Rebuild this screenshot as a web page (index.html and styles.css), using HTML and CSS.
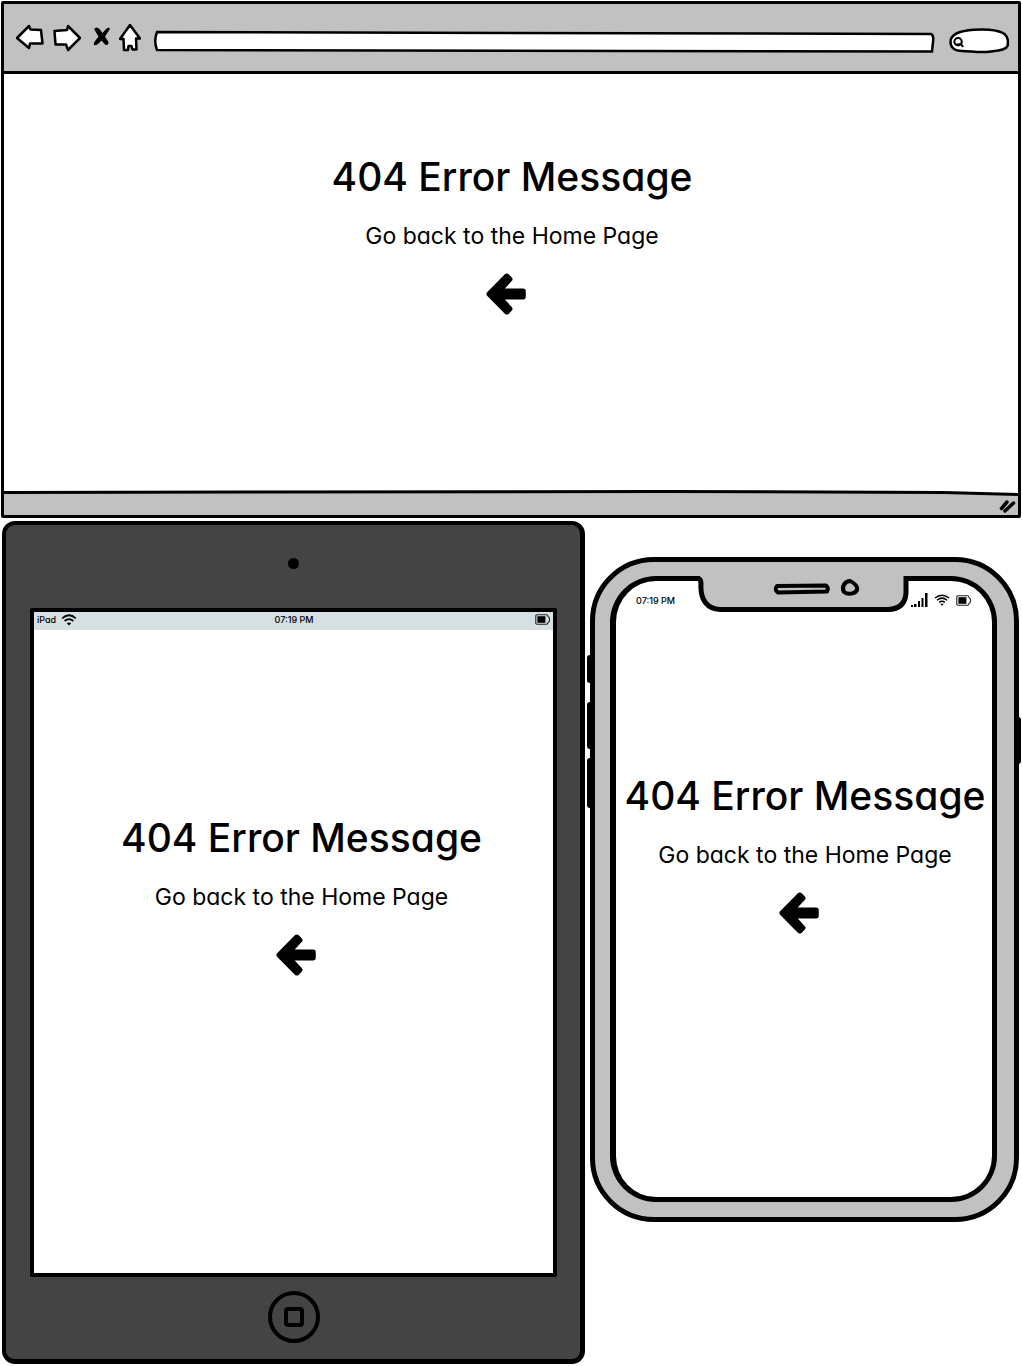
FILE: index.html
```html
<!DOCTYPE html>
<html lang="en">
<head>
<meta charset="utf-8">
<meta name="viewport" content="width=device-width, initial-scale=1">
<title>404 Error Message</title>
<link rel="stylesheet" href="styles.css">
</head>
<body>
<svg class="symbols" aria-hidden="true">
  <symbol id="arrow" viewBox="0 0 52 42">
    <path d="M3.300 21L20.800 3.300L23.700 6.200L12.500 18.200H37V23.800H12.500L23.700 35.800L20.800 38.700Z" stroke="#000" stroke-width="5.500" stroke-linejoin="round"/>
  </symbol>
  <symbol id="wifi" viewBox="0 0 16 12">
    <path d="M1.2 4.4Q8-1.8 14.8 4.4M3.6 7Q8 3.2 12.4 7" fill="none" stroke="#000" stroke-width="1.8"/>
    <path d="M5.8 9.2Q8 7.6 10.2 9.2L8 11.6Z"/>
  </symbol>
  <symbol id="battery" viewBox="0 0 16 11">
    <path d="M2 .8H11.5Q12.8.8 13 2.4Q14.6 3 14.6 5.5T13 8.6Q12.8 10.2 11.5 10.2H2Q.8 10.2.8 9V2Q.8.8 2 .8Z" fill="none" stroke="#222" stroke-width="1.1"/>
    <path d="M2.4 2.2H10.4V8.8H2.4Z"/>
  </symbol>
</svg>

<section class="browser">
  <header class="toolbar">
    <button class="tool" aria-label="Back"><svg width="28" height="28" viewBox="16 23 28 28"><path d="M17 37L29 25L30.5 28.500L41 29L42.5 42.500H30L29 47Z"/></svg></button>
    <button class="tool" aria-label="Forward"><svg width="28" height="28" viewBox="53 23 28 28"><path d="M54.500 30L67 29L68 25L80 37L68 49L66 43.500L55.500 43.500Z"/></svg></button>
    <button class="tool" aria-label="Stop"><svg width="20" height="28" viewBox="90 23 20 28"><path class="cross" d="M94 28Q96.500 25 99.500 28L102.500 32L106 28Q109 25.500 110 28L105 35.500L108.500 41Q108.500 45 105 43.500L101.500 39.500L98 43Q93 46 94 41.500L98.500 35.500Z"/></svg></button>
    <button class="tool" aria-label="Home"><svg width="22" height="28" viewBox="119 23 22 28"><path d="M130 24L140 37.500H136L136.500 48.500H132.500L131.500 45H128.500L128 49H124L123.500 38H120Z"/></svg></button>
    <div class="field address">
      <svg class="field-shape" viewBox="0 0 781 23" preserveAspectRatio="none" aria-hidden="true"><path d="M3 2L777 4Q780 5 779 12L778 21.500L3 20Q-.5 11 3 2Z"/></svg>
      <input class="field-input" type="text" aria-label="Address">
    </div>
    <div class="field search">
      <svg class="field-shape" viewBox="949 28 60 26" aria-hidden="true"><path d="M950.500 42C950.500 33 962 30.500 974 29.800C986 29 998 30.500 1003 33C1008 36 1008.500 41 1007.500 46C1005 51 996 50.500 986 52C976 52.500 970 51 962 51C954 51 950.500 47 950.500 42Z"/><path class="lens" d="M958 38A3.700 3.700 0 1 0 958.100 38ZM957 44.500L961 44L963 47"/></svg>
      <input class="field-input" type="search" aria-label="Search">
    </div>
  </header>
  <main class="page">
    <div class="message">
      <h1 class="title">404 Error Message</h1>
      <p class="hint">Go back to the Home Page</p>
      <a class="back" href="#home" aria-label="Home page"><svg class="arrow"><use href="#arrow"/></svg></a>
    </div>
  </main>
  <footer class="statusline">
    <svg class="edge" viewBox="0 0 1014 6" preserveAspectRatio="none" aria-hidden="true"><path d="M0 3L240 2L660 1.500L940 2.500L1014 5V6H0Z" fill="#c1c1c1"/><path d="M0 2.500L240 2L660 1.500L940 2.500L1014 4.500" fill="none" stroke="#000" stroke-width="3"/></svg>
    <svg class="grip" width="17" height="14" viewBox="0 0 17 14" aria-hidden="true"><path d="M2.500 9.500L8 3M6 12L14.500 4" fill="none" stroke="#000" stroke-width="3.500" stroke-linecap="round"/></svg>
  </footer>
</section>

<div class="devices">
  <section class="tablet">
    <div class="tablet-top"><span class="camera"></span></div>
    <div class="tablet-screen">
      <div class="tablet-status">
        <span class="carrier">iPad <svg width="16" height="12"><use href="#wifi"/></svg></span>
        <time>07:19 PM</time>
        <svg class="charge" width="16" height="11"><use href="#battery"/></svg>
      </div>
      <div class="message">
        <h2 class="title">404 Error Message</h2>
        <p class="hint">Go back to the Home Page</p>
        <a class="back" href="#home" aria-label="Home page"><svg class="arrow"><use href="#arrow"/></svg></a>
      </div>
    </div>
    <div class="tablet-bottom"><button class="home" aria-label="Home button"><span class="home-mark"></span></button></div>
  </section>

  <section class="phone">
    <span class="key key-mute"></span>
    <span class="key key-up"></span>
    <span class="key key-down"></span>
    <span class="key key-power"></span>
    <svg class="notch" width="218" height="52" viewBox="694 562 218 52" aria-hidden="true">
      <path d="M700 574V590Q703 609 720 609H888Q906 609 906 592V574Z" fill="#c1c1c1"/>
      <g fill="none" stroke="#000" stroke-width="5">
        <path d="M694 578.500H698Q701 579 701 584C700 601 708 609 720 609.500H888Q905 609 906 593V578.500H912"/>
        <path d="M777 586L826 585.500Q829 588 827 591.500L778 592.500Q774 590 777 586Z" stroke-width="4" stroke-linejoin="round"/>
        <path d="M850 581C855 583 858 587 857 590C855 594 848 595 844 592C841 587 845 581 850 581Z" stroke-width="4"/>
      </g>
    </svg>
    <div class="phone-screen">
      <div class="phone-status">
        <time>07:19 PM</time>
        <span class="signals">
          <svg width="17" height="14" viewBox="0 0 17 14"><path d="M0 12H2V14H0ZM3 11H5.500V14H3ZM7 8H9V14H7ZM10.500 5H12.500V14H10.500ZM14 0H16.500V14H14Z"/></svg>
          <svg width="16" height="12" viewBox="0 0 16 12"><path d="M1 4Q8-1.500 15 4M3 6.200Q8 2 13 6.200M5.200 8.400Q8 6 10.800 8.400" fill="none" stroke="#000" stroke-width="1.500"/><path d="M6.200 9.800H9.800L8 11.800Z"/></svg>
          <svg width="16" height="11"><use href="#battery"/></svg>
        </span>
      </div>
      <div class="message">
        <h2 class="title">404 Error Message</h2>
        <p class="hint">Go back to the Home Page</p>
        <a class="back" href="#home" aria-label="Home page"><svg class="arrow"><use href="#arrow"/></svg></a>
      </div>
    </div>
  </section>
</div>
</body>
</html>
```
FILE: styles.css
```css
* { box-sizing: border-box; }

body {
  margin: 0;
  padding: 1px 0 2px;
  background: #fff;
  color: #000;
  font-family: Inter, "Noto Sans", sans-serif;
  /* single-storey "a" */
  font-feature-settings: "cv11";
}

svg { display: block; }
.symbols { position: absolute; width: 0; height: 0; }
button { padding: 0; border: 0; background: none; }

/* Message shared by every screen */
.message { display: flex; flex-direction: column; align-items: center; white-space: nowrap; }
.title { margin: 0; font-size: 39px; line-height: 48px; font-weight: 500; }
.hint { margin: 19px 0 21px; font-size: 23px; line-height: 32px; }
.arrow { width: 52px; height: 42px; }

/* Browser window */
.browser { margin: 0 1px; border: 3px solid #000; border-radius: 2px; }
.toolbar {
  display: flex;
  align-items: center;
  gap: 9px;
  height: 70px;
  padding: 0 9px 0 12px;
  background: #c1c1c1;
  border-bottom: 3px solid #000;
}
.tool path { fill: #fff; stroke: #000; stroke-width: 2.5; stroke-linejoin: round; }
.tool .cross { fill: #000; stroke: none; }
.field { display: grid; margin-top: 7px; }
.field > * { grid-area: 1 / 1; }
.field-shape { width: 100%; height: 100%; }
.field-shape path { fill: #fff; stroke: #000; stroke-width: 2.5; vector-effect: non-scaling-stroke; }
.field-shape .lens { fill: none; stroke-width: 2; }
.field-input { width: 100%; min-width: 0; padding: 0 8px; border: 0; background: none; font: inherit; font-size: 12px; appearance: none; outline-offset: -2px; }
.address { flex: 1; height: 23px; margin-left: 4px; }
.search { width: 60px; height: 26px; margin-left: 5px; }
.search .field-input { padding-left: 16px; }
.page { min-height: 416px; padding: 79px 0 0 2px; }
.statusline { display: flex; flex-direction: column; height: 25px; background: #c1c1c1; }
.edge { width: 100%; height: 6px; background: #fff; }
.grip { align-self: flex-end; margin: 3px 2px 0; }

/* Devices */
.devices {
  display: grid;
  grid-template-columns: 583fr 429fr;
  gap: 5px;
  align-items: start;
  padding: 3px 3px 0 2px;
}

.tablet {
  display: flex;
  flex-direction: column;
  min-height: 843px;
  padding: 0 23px 0 24px;
  background: #444;
  border: 4px solid #000;
  border-right-width: 5px;
  border-bottom-width: 5px;
  border-radius: 13px;
}
.tablet-top { display: flex; justify-content: center; height: 83px; padding-top: 33px; }
.camera { width: 11px; height: 11px; border-radius: 50%; background: #000; }
.tablet-screen { flex: 1; background: #fff; border: 4px solid #000; border-radius: 2px; }
.tablet-status {
  display: grid;
  grid-template-columns: 1fr auto 1fr;
  align-items: center;
  height: 18px;
  padding: 0 2px 3px 3px;
  background: #d6dfe2;
  font-size: 9px;
  font-weight: 500;
}
.carrier { display: flex; gap: 5px; align-items: center; }
.charge { justify-self: end; }
.tablet-screen .message { margin: 184px 0 0 16px; }
.tablet-bottom { display: flex; justify-content: center; align-items: center; height: 82px; padding-bottom: 2px; }
.home { display: grid; place-items: center; width: 52px; height: 52px; border: 4px solid #000; border-radius: 50%; }
.home-mark { width: 20px; height: 20px; border: 4px solid #000; border-radius: 4px; }

.phone {
  position: relative;
  display: flex;
  min-height: 665px;
  margin-top: 36px;
  padding: 14px 17px 15px 15px;
  background: #c1c1c1;
  border: 5px solid #000;
  border-radius: 64px;
}
.phone-screen { flex: 1; min-width: 0; background: #fff; border: 5px solid #000; border-width: 5px 5px 5px 6px; border-radius: 46px; }
.phone-status { display: flex; justify-content: space-between; align-items: center; height: 40px; padding: 0 20px 2px; font-size: 9px; font-weight: 500; }
.signals { display: flex; align-items: center; gap: 6px; }
.phone-screen .message { margin: 151px 0 0 2px; }

/* Notch and side keys lie over the phone's outline */
.notch { position: absolute; top: 0; left: 50%; margin-left: -111px; }
.key { position: absolute; left: -8px; width: 6px; border-radius: 3px; background: #000; }
.key-mute { top: 93px; height: 28px; }
.key-up { top: 140px; height: 47px; }
.key-down { top: 196px; height: 50px; }
.key-power { top: 155px; left: auto; right: -7px; width: 7px; height: 47px; }
```
